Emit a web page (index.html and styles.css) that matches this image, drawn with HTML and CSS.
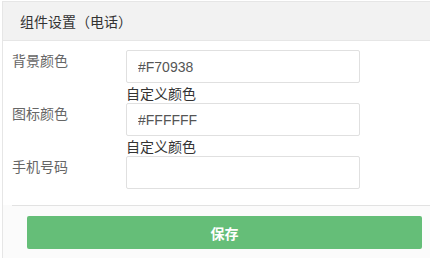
FILE: index.html
```html
<!DOCTYPE html>
<html lang="zh">
<head>
<meta charset="utf-8">
<link rel="stylesheet" href="styles.css">
</head>
<body>
<div class="panel">
  <div class="panel-head">组件设置（电话）</div>
  <div class="panel-body">
    <div class="row">
      <label class="label">背景颜色</label>
      <div class="field">
        <input class="input" type="text" value="#F70938">
        <div class="help">自定义颜色</div>
      </div>
    </div>
    <div class="row">
      <label class="label">图标颜色</label>
      <div class="field">
        <input class="input" type="text" value="#FFFFFF">
        <div class="help">自定义颜色</div>
      </div>
    </div>
    <div class="row">
      <label class="label">手机号码</label>
      <div class="field">
        <input class="input" type="text" value="">
      </div>
    </div>
  </div>
  <div class="panel-foot">
    <div class="foot-inner">
      <button class="btn-save" type="button">保存</button>
    </div>
  </div>
</div>
</body>
</html>
```
FILE: styles.css
```css
html, body {
  margin: 0;
  padding: 0;
  background: #ffffff;
  overflow: hidden;
}
body {
  font-family: "Liberation Sans", "Noto Sans CJK SC", sans-serif;
  font-size: 14px;
  color: #333;
}
.panel {
  margin: 1px 0 0 2px;
  border: 1px solid #e6e6e6;
  border-right: none;
  background: #fff;
}
.panel-head {
  height: 38px;
  line-height: 38px;
  background: #f2f2f2;
  border-bottom: 1px solid #e6e6e6;
  padding-left: 17px;
  color: #333;
  font-family: "Noto Sans CJK SC", sans-serif;
  font-size: 14px;
}
.panel-body {
  padding: 9px 0 0 9px;
}
.row {
  display: grid;
  grid-template-columns: 114px 234px;
}
.label {
  line-height: 20px;
  color: #666;
  font-family: "Noto Sans CJK SC", sans-serif;
  font-size: 14px;
}
.field {
  display: flex;
  flex-direction: column;
}
.input {
  box-sizing: border-box;
  height: 33px;
  width: 234px;
  margin: 0;
  padding: 0 10px 0 11px;
  border: 1px solid #e0e0e0;
  border-radius: 2px;
  font-family: "Liberation Sans", sans-serif;
  font-size: 14px;
  color: #555;
  background: #fff;
  outline: none;
}
.help {
  height: 20px;
  line-height: 20px;
  color: #333;
  font-family: "Noto Sans CJK SC", sans-serif;
  font-size: 14px;
}
.panel-foot {
  margin-top: 16px;
  padding-left: 9px;
  background: #fbfbfb;
}
.foot-inner {
  border-top: 1px solid #e2e2e2;
  padding: 10px 8px 12px 15px;
}
.btn-save {
  display: block;
  width: 100%;
  height: 33px;
  border: none;
  border-radius: 2px;
  background: #65be78;
  color: #fff;
  font-family: "Noto Sans CJK SC", sans-serif;
  font-size: 14px;
  font-weight: bold;
  padding: 0;
}
```
